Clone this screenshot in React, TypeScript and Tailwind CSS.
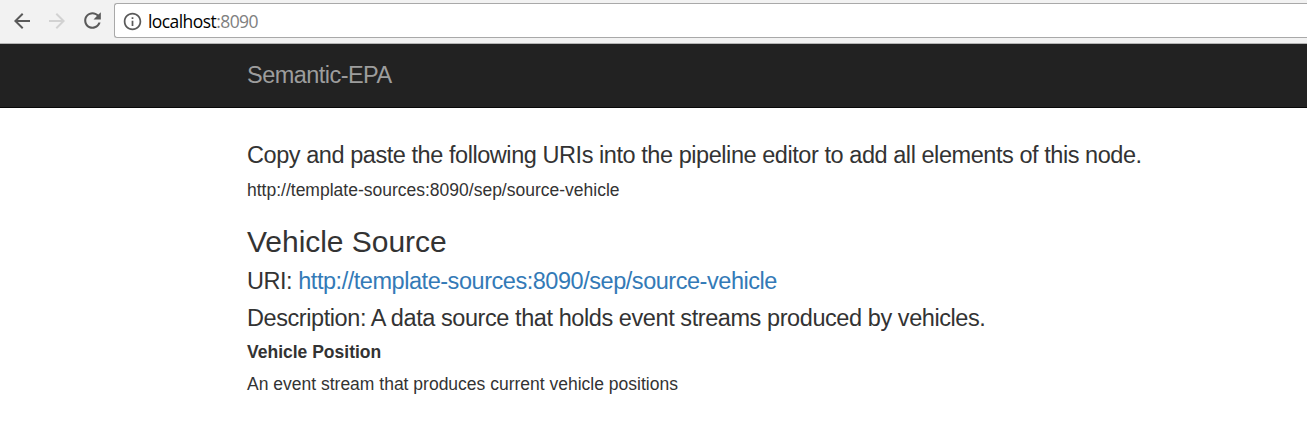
import React from "react";

function Toolbar() {
  return (
    <div className="flex h-11 items-start border-b border-[#b5b5b5] bg-[#f2f2f2] pt-[3px]">
      <div className="flex h-[35px] w-[114px] shrink-0 items-center pl-[10px]">
        <svg className="h-6 w-6" viewBox="0 0 24 24" fill="#5a5a5a">
          <path d="M20 11H7.830l5.590-5.590L12 4l-8 8 8 8 1.410-1.410L7.830 13H20v-2z" />
        </svg>
        <svg className="ml-[11px] h-6 w-6" viewBox="0 0 24 24" fill="#d2d2d2">
          <path d="M12 4l-1.410 1.410L16.170 11H4v2h12.170l-5.580 5.590L12 20l8-8z" />
        </svg>
        <svg className="ml-[11px] h-[25px] w-[25px]" viewBox="0 0 24 24" fill="#5a5a5a">
          <path d="M17.650 6.350C16.200 4.900 14.210 4 12 4c-4.420 0-7.990 3.580-7.990 8s3.570 8 7.990 8c3.730 0 6.840-2.550 7.730-6h-2.080c-.82 2.330-3.040 4-5.650 4-3.310 0-6-2.690-6-6s2.690-6 6-6c1.660 0 3.140.69 4.220 1.780L13 11h7V4l-2.350 2.350z" />
        </svg>
      </div>
      <div className="flex h-[35px] flex-1 items-center rounded-l-[3px] border border-r-0 border-[#a9a9a9] bg-white pl-[7px]">
        <svg className="mt-px h-[21px] w-[21px]" viewBox="0 0 24 24" fill="#5a5a5a">
          <path d="M11 17h2v-6h-2v6zm1-15C6.480 2 2 6.480 2 12s4.480 10 10 10 10-4.480 10-10S17.520 2 12 2zm0 18c-4.410 0-8-3.590-8-8s3.590-8 8-8 8 3.590 8 8-3.590 8-8 8zM11 9h2V7h-2v2z" />
        </svg>
        <span className="ml-[5px] font-['Open_Sans',sans-serif] text-[17.5px] leading-6 tracking-[-0.57px] text-black">
          localhost<span className="text-[#808080]">:8090</span>
        </span>
      </div>
    </div>
  );
}

export default function App() {
  return (
    <div className="h-[429px] overflow-hidden bg-white font-['Liberation_Sans',Arial,sans-serif] text-[#333333]">
      <Toolbar />
      <nav className="flex h-16 items-center border-b border-[#080808] bg-[#222222] pb-px pl-[247px] text-[23.5px] leading-[30px] tracking-[-0.54px] text-[#9d9d9d]">
        Semantic-EPA
      </nav>
      <main className="whitespace-nowrap pl-[247px] pt-8">
        <h4 className="text-[23.5px] leading-[30px] tracking-[-0.442px]">
          Copy and paste the following URIs into the pipeline editor to add all elements of this node.
        </h4>
        <p className="mt-2 text-[17.5px] leading-6">http://template-sources:8090/sep/source-vehicle</p>
        <h3 className="mt-6 text-[30px] leading-[32px] tracking-[-0.03px]">Vehicle Source</h3>
        <h4 className="mt-2 text-[23.5px] leading-[30px] tracking-[-0.46px]">
          URI: <a className="text-[#337ab7]">http://template-sources:8090/sep/source-vehicle</a>
        </h4>
        <h4 className="mt-[7px] text-[23.5px] leading-[30px] tracking-[-0.424px]">
          Description: A data source that holds event streams produced by vehicles.
        </h4>
        <p className="mt-[7px] text-[17.5px] font-bold leading-6">Vehicle Position</p>
        <p className="mt-2 text-[17.5px] leading-6">An event stream that produces current vehicle positions</p>
      </main>
    </div>
  );
}
